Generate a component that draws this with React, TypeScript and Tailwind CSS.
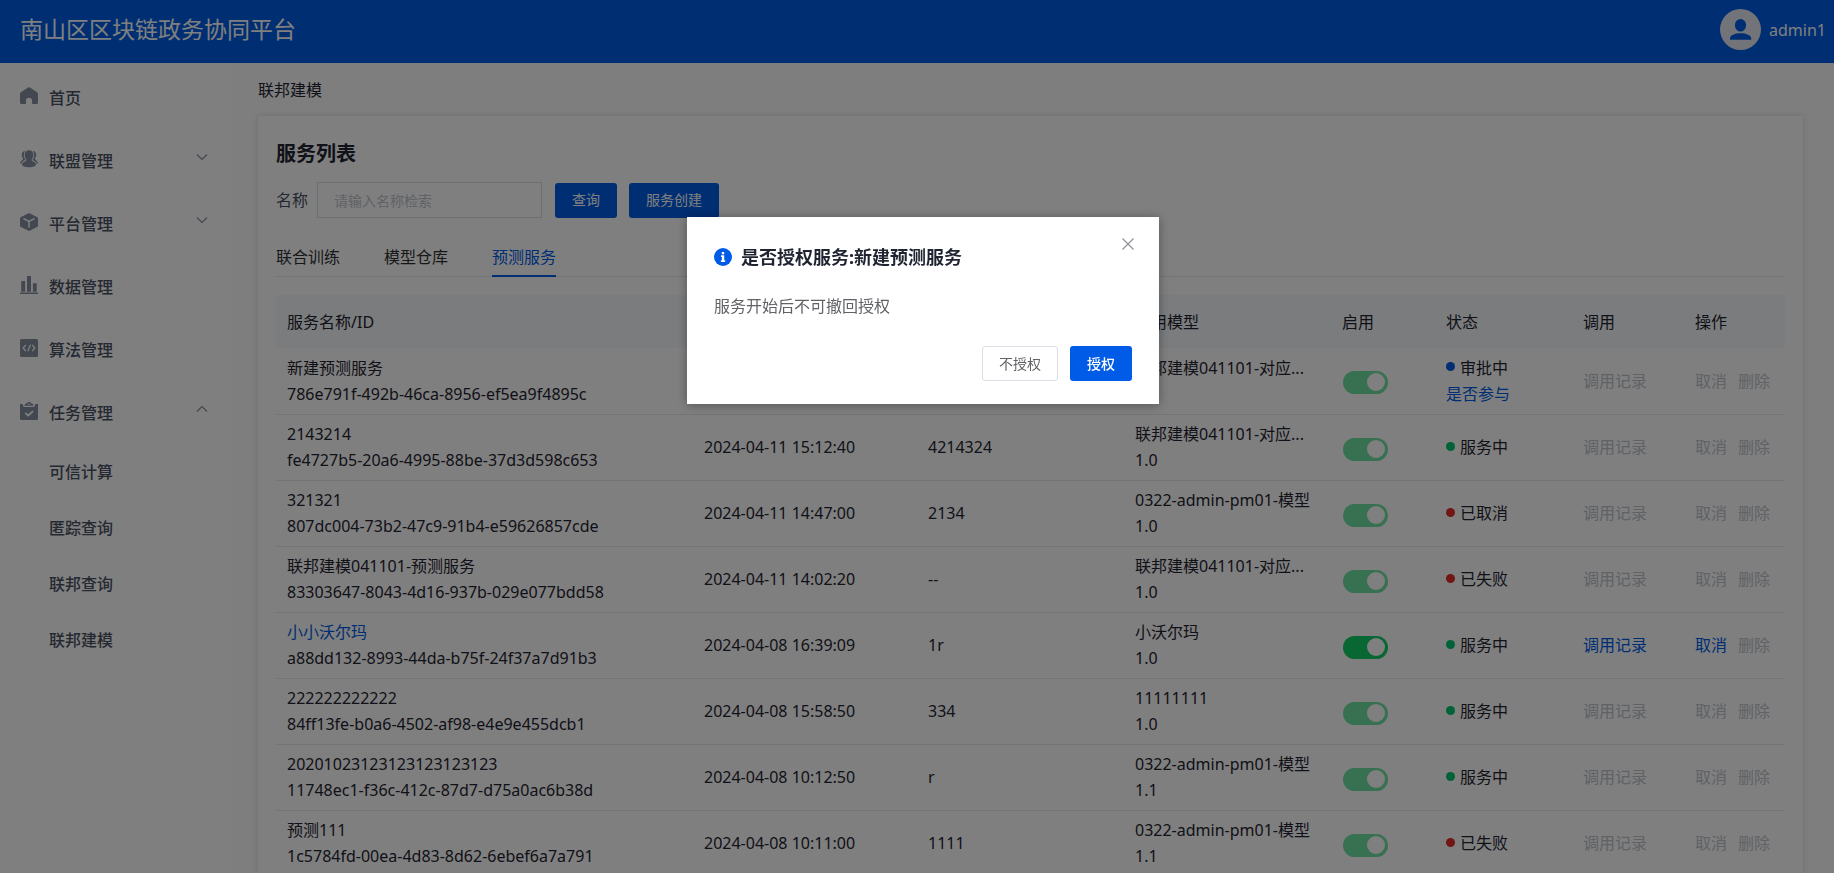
import { useState } from "react";
import type { ReactNode } from "react";
import { clsx } from "clsx";

type Status = "approving" | "running" | "stopped" | "failed";

interface Service {
  name: string;
  id: string;
  time: string;
  desc: string;
  model: string;
  version: string;
  status: Status;
  active?: boolean;
}

const services: Service[] = [
  { name: "新建预测服务", id: "786e791f-492b-46ca-8956-ef5ea9f4895c", time: "2024-04-11 15:30:20", desc: "--", model: "联邦建模041101-对应...", version: "1.0", status: "approving" },
  { name: "2143214", id: "fe4727b5-20a6-4995-88be-37d3d598c653", time: "2024-04-11 15:12:40", desc: "4214324", model: "联邦建模041101-对应...", version: "1.0", status: "running" },
  { name: "321321", id: "807dc004-73b2-47c9-91b4-e59626857cde", time: "2024-04-11 14:47:00", desc: "2134", model: "0322-admin-pm01-模型", version: "1.0", status: "stopped" },
  { name: "联邦建模041101-预测服务", id: "83303647-8043-4d16-937b-029e077bdd58", time: "2024-04-11 14:02:20", desc: "--", model: "联邦建模041101-对应...", version: "1.0", status: "failed" },
  { name: "小小沃尔玛", id: "a88dd132-8993-44da-b75f-24f37a7d91b3", time: "2024-04-08 16:39:09", desc: "1r", model: "小沃尔玛", version: "1.0", status: "running", active: true },
  { name: "222222222222", id: "84ff13fe-b0a6-4502-af98-e4e9e455dcb1", time: "2024-04-08 15:58:50", desc: "334", model: "11111111", version: "1.0", status: "running" },
  { name: "20201023123123123123123", id: "11748ec1-f36c-412c-87d7-d75a0ac6b38d", time: "2024-04-08 10:12:50", desc: "r", model: "0322-admin-pm01-模型", version: "1.1", status: "running" },
  { name: "预测111", id: "1c5784fd-00ea-4d83-8d62-6ebef6a7a791", time: "2024-04-08 10:11:00", desc: "1111", model: "0322-admin-pm01-模型", version: "1.1", status: "failed" },
];

const statusText: Record<Status, string> = {
  approving: "审批中",
  running: "服务中",
  stopped: "已取消",
  failed: "已失败",
};

const statusDot: Record<Status, string> = {
  approving: "bg-[#005ce6]",
  running: "bg-[#00c670]",
  stopped: "bg-[#e02f2a]",
  failed: "bg-[#e02f2a]",
};

function Icon({ children }: { children: ReactNode }) {
  return (
    <svg viewBox="0 0 18 18" className="size-[18px] shrink-0 fill-[#868f9e]" aria-hidden="true">
      {children}
    </svg>
  );
}

const icons = {
  home: (
    <Icon>
      <path d="M8 .5a1.8 1.8 0 0 1 2 0l7 4.700a2.200 2.200 0 0 1 1 1.800v8.500a1.600 1.600 0 0 1-1.600 1.600h-4.300v-3.300a3.100 3.100 0 0 0-6.200 0v3.300H1.600A1.600 1.600 0 0 1 0 15.500V7a2.200 2.200 0 0 1 1-1.800z" />
    </Icon>
  ),
  alliance: (
    <Icon>
      <path d="M5.600 1C3.200.7 1.700 2.500 1.800 5c.1 1.600.8 2.700 1.300 3.500.2 1.500-2.600 2.200-2.900 4.300-.1.800.6 1.400 1.800 1.400h14c1.200 0 1.900-.6 1.800-1.400-.3-2.100-3.100-2.800-2.900-4.300.5-.8 1.200-1.900 1.300-3.500.1-2.500-1.400-4.300-3.800-4z" />
      <path
        d="M9 .3c2.700 0 4.300 1.800 4.300 4.400 0 2-.7 3.700-1.600 4.700-.3.800.1 1.400 1 1.800 1.900.8 3.200 1.700 3.200 3.200 0 1.700-2.900 2.800-6.900 2.800s-6.900-1.100-6.900-2.800c0-1.500 1.300-2.400 3.200-3.200.9-.4 1.300-1 1-1.800-.9-1-1.600-2.700-1.600-4.700C4.700 2.100 6.300.3 9 .3z"
        className="stroke-white [paint-order:stroke] [stroke-width:1.800]"
      />
    </Icon>
  ),
  platform: (
    <Icon>
      <path d="M8 .4a2 2 0 0 1 2 0l7 3.500a1.800 1.800 0 0 1 1 1.600v7a1.800 1.800 0 0 1-1 1.600l-7 3.500a2 2 0 0 1-2 0l-7-3.500a1.800 1.800 0 0 1-1-1.600v-7a1.800 1.800 0 0 1 1-1.600z" />
      <path d="M4 5.800l5 2.700 5-2.700M9 8.500V14" className="fill-none stroke-white [stroke-linecap:round] [stroke-width:1.500]" />
    </Icon>
  ),
  data: (
    <Icon>
      <path d="M1.200 5h3.900v10.800H1.200zM7 0h4v15.800H7zM12.900 7.200h3.800v8.600h-3.800zM0 16.500h18V18H0z" />
    </Icon>
  ),
  algorithm: (
    <Icon>
      <rect width="18" height="18" rx="1.500" />
      <path d="M5.400 6.300L3.200 9l2.200 2.700M12.600 6.300L14.800 9l-2.200 2.700M10.200 6.200l-2.200 5.500" className="fill-none stroke-white [stroke-linecap:round] [stroke-width:1.300]" />
    </Icon>
  ),
  task: (
    <Icon>
      <path d="M0 2h2.900v1.300C2.900 4.300 3.700 5 4.700 5h8.600c1 0 1.800-.7 1.800-1.700V2H18v14.500a1.500 1.500 0 0 1-1.500 1.500h-15A1.500 1.500 0 0 1 0 16.500z" />
      <path d="M4.400 3.800c0-1.200.9-2 2.100-2.200C7 .6 7.900 0 9 0s2 .6 2.500 1.600c1.200.2 2.100 1 2.100 2.200zM9 1.400a.8.8 0 1 0 0 1.600.8.8 0 0 0 0-1.600z" fillRule="evenodd" />
      <path d="M5.300 11l2.900 2.500 4.800-4.400" className="fill-none stroke-white [stroke-width:1.800]" />
    </Icon>
  ),
};

function Chevron({ up }: { up?: boolean }) {
  return (
    <svg viewBox="0 0 12 12" className="mb-2 ml-auto size-3 fill-none stroke-[#868f9e]" aria-hidden="true">
      <path d={up ? "M1 8.500l5-5 5 5" : "M1 3.500l5 5 5-5"} strokeWidth="1.200" />
    </svg>
  );
}

const menu: { label: string; icon: ReactNode; arrow?: "down" | "up" }[] = [
  { label: "首页", icon: icons.home },
  { label: "联盟管理", icon: icons.alliance, arrow: "down" },
  { label: "平台管理", icon: icons.platform, arrow: "down" },
  { label: "数据管理", icon: icons.data },
  { label: "算法管理", icon: icons.algorithm },
  { label: "任务管理", icon: icons.task, arrow: "up" },
];

const taskMenu = ["可信计算", "匿踪查询", "联邦查询", "联邦建模"];

function Header() {
  return (
    <header className="flex h-[63px] shrink-0 items-center justify-between bg-[#005ce6] pr-2 pl-5 text-white">
      <h1 className="pb-1.5 text-[23px] leading-8">南山区区块链政务协同平台</h1>
      <div className="flex items-center gap-2 pb-1">
        <svg viewBox="0 0 41 41" className="size-[41px]" aria-hidden="true">
          <circle cx="20.500" cy="20.500" r="20.500" className="fill-[#e4e8f2]" />
          <path d="M20.500 10a5.600 6.300 0 1 1 0 12.600 5.600 6.300 0 0 1 0-12.600zM10 30.700v-1.500c0-3 5-5 10.500-5s10.700 2 10.700 5v1.500z" className="fill-[#005ce6]" />
        </svg>
        <span className="text-base leading-6">admin1</span>
      </div>
    </header>
  );
}

function Sidebar() {
  return (
    <nav className="w-[231px] shrink-0 bg-white pt-[3px] font-medium text-[#4a5264]">
      <ul>
        {menu.map((item) => (
          <li key={item.label}>
            <a href="#" className="flex h-[63px] items-center pr-[23px] pl-5">
              <span className="pb-1">{item.icon}</span>
              <span className="ml-[11px]">{item.label}</span>
              {item.arrow && <Chevron up={item.arrow === "up"} />}
            </a>
          </li>
        ))}
      </ul>
      <ul>
        {taskMenu.map((label) => (
          <li key={label}>
            <a href="#" className="flex h-14 items-center pl-[49px]">{label}</a>
          </li>
        ))}
      </ul>
    </nav>
  );
}

function Toggle({ label, enabled }: { label: string; enabled?: boolean }) {
  return (
    <label className="relative mt-1 ml-px block h-[23px] w-[45px]">
      <input
        type="checkbox"
        role="switch"
        aria-label={label}
        defaultChecked
        disabled={!enabled}
        className="block h-[23px] w-[45px] appearance-none rounded-full bg-[#13ce66] disabled:bg-[#71e2a3]"
      />
      <span className="pointer-events-none absolute top-0.5 right-[3px] size-[18px] rounded-full bg-white" />
    </label>
  );
}

function ActionButton({ enabled, children }: { enabled?: boolean; children: ReactNode }) {
  return (
    <button type="button" disabled={!enabled} className="text-[#005ce6] disabled:text-[#c0c4cc]">
      {children}
    </button>
  );
}

function ServiceTable() {
  return (
    <table className="mt-[18px] w-full table-fixed text-left text-[#1f2430]">
      <colgroup>
        <col />
        <col className="w-[224px]" />
        <col className="w-[207px]" />
        <col className="w-[207px]" />
        <col className="w-[104px]" />
        <col className="w-[137px]" />
        <col className="w-[112px]" />
        <col className="w-[101px]" />
      </colgroup>
      <thead>
        <tr className="h-[53px] bg-[#f6f8fb]">
          {["服务名称/ID", "创建时间", "描述", "应用模型", "启用", "状态", "调用", "操作"].map((head) => (
            <th key={head} scope="col" className="px-[11px] font-normal">{head}</th>
          ))}
        </tr>
      </thead>
      <tbody>
        {services.map((row) => (
          <tr key={row.id} className="h-[66px] border-b border-[#e4e8f2] leading-[26px]">
            <td className="px-[11px]">
              <div className={clsx("truncate", row.active && "text-[#005ce6]")}>{row.name}</div>
              <div className="truncate">{row.id}</div>
            </td>
            <td className="px-[11px]">{row.time}</td>
            <td className="px-[11px]">{row.desc}</td>
            <td className="px-[11px]">
              <div className="truncate">{row.model}</div>
              <div>{row.version}</div>
            </td>
            <td className="px-[11px]">
              <Toggle label={`启用 ${row.name}`} enabled={row.active} />
            </td>
            <td className="px-[11px]">
              <div className="flex items-center gap-[5px]">
                <span className={clsx("mb-0.5 size-[9px] rounded-full", statusDot[row.status])} />
                {statusText[row.status]}
              </div>
              {row.status === "approving" && <ActionButton enabled>是否参与</ActionButton>}
            </td>
            <td className="px-[11px]">
              <ActionButton enabled={row.active}>调用记录</ActionButton>
            </td>
            <td className="pl-[11px]">
              <div className="flex gap-[11px]">
                <ActionButton enabled={row.active}>取消</ActionButton>
                <ActionButton>删除</ActionButton>
              </div>
            </td>
          </tr>
        ))}
      </tbody>
    </table>
  );
}

function ConfirmDialog({ onClose }: { onClose: () => void }) {
  return (
    <div className="fixed inset-0 flex justify-center bg-black/50 px-4 pt-[217px] pr-[4px]">
      <section
        role="dialog"
        aria-modal="true"
        aria-labelledby="confirm-title"
        className="relative w-full max-w-[472px] self-start bg-white px-[27px] pt-6 pb-[23px] shadow-[0_1px_10px_rgba(0,0,0,0.35)]"
      >
        <button type="button" aria-label="关闭" onClick={onClose} className="absolute top-[21px] right-[25px]">
          <svg viewBox="0 0 12 12" className="size-3 fill-none stroke-[#909399]" aria-hidden="true">
            <path d="M.5.500l11 11M11.500.500l-11 11" strokeWidth="1.200" />
          </svg>
        </button>
        <h2 id="confirm-title" className="flex items-center gap-[9px] text-lg leading-8 font-bold text-[#1f2430]">
          <svg viewBox="0 0 18 18" className="size-[18px]" aria-hidden="true">
            <circle cx="9" cy="9" r="9" className="fill-[#005ce6]" />
            <path d="M7.800 4h2.400v2.200H7.800zM7 7.300h3.200v4.900h1V14H6.900v-1.800h1V9H7z" className="fill-white" />
          </svg>
          是否授权服务:新建预测服务
        </h2>
        <p className="mt-[21px] leading-6 text-[#606266]">服务开始后不可撤回授权</p>
        <div className="mt-7 flex justify-end gap-3 text-sm">
          <button type="button" onClick={onClose} className="h-[35px] rounded-[3px] border border-[#dcdfe6] px-4 text-[#606266]">
            不授权
          </button>
          <button type="button" onClick={onClose} className="h-[35px] rounded-[3px] bg-[#005ce6] px-[17px] font-medium text-white">
            授权
          </button>
        </div>
      </section>
    </div>
  );
}

export default function App() {
  const [confirming, setConfirming] = useState(true);
  const primary = "h-[35px] rounded-[3px] bg-[#005ce6] px-[17px] text-sm text-white";

  return (
    <div className="flex h-screen flex-col overflow-hidden bg-[#fcfcfc] font-['Noto_Sans','Noto_Sans_CJK_SC',sans-serif] text-base">
      <Header />
      <div className="flex min-h-0 flex-1">
        <Sidebar />
        <main className="min-w-0 flex-1 overflow-hidden pr-[31px] pl-[27px]">
          <div className="flex h-[53px] items-center text-[#1f2430]">联邦建模</div>
          <div className="bg-white px-[18px] pt-[22px] shadow-[0_0_6px_rgba(0,0,0,0.12)]">
            <h2 className="text-xl leading-8 font-bold text-[#1f2430]">服务列表</h2>
            <form className="mt-3 flex items-center" onSubmit={(event) => event.preventDefault()}>
              <label htmlFor="service-name" className="text-[#4a5264]">名称</label>
              <input
                id="service-name"
                placeholder="请输入名称检索"
                className="ml-[9px] h-9 w-[225px] border border-[#dcdfe6] px-4 text-sm placeholder:text-[#c0c4cc]"
              />
              <button type="submit" className={clsx(primary, "ml-[13px]")}>查询</button>
              <button type="button" className={clsx(primary, "ml-3")}>服务创建</button>
            </form>
            <div role="tablist" className="mt-5 flex gap-11 border-b border-[#e4e8f2] text-[#303133]">
              <button type="button" role="tab" aria-selected="false" className="h-[38px]">联合训练</button>
              <button type="button" role="tab" aria-selected="false" className="h-[38px]">模型仓库</button>
              <button type="button" role="tab" aria-selected="true" className="-mb-px h-[39px] border-b-2 border-[#005ce6] text-[#005ce6]">
                预测服务
              </button>
            </div>
            <ServiceTable />
          </div>
        </main>
      </div>
      {confirming && <ConfirmDialog onClose={() => setConfirming(false)} />}
    </div>
  );
}
